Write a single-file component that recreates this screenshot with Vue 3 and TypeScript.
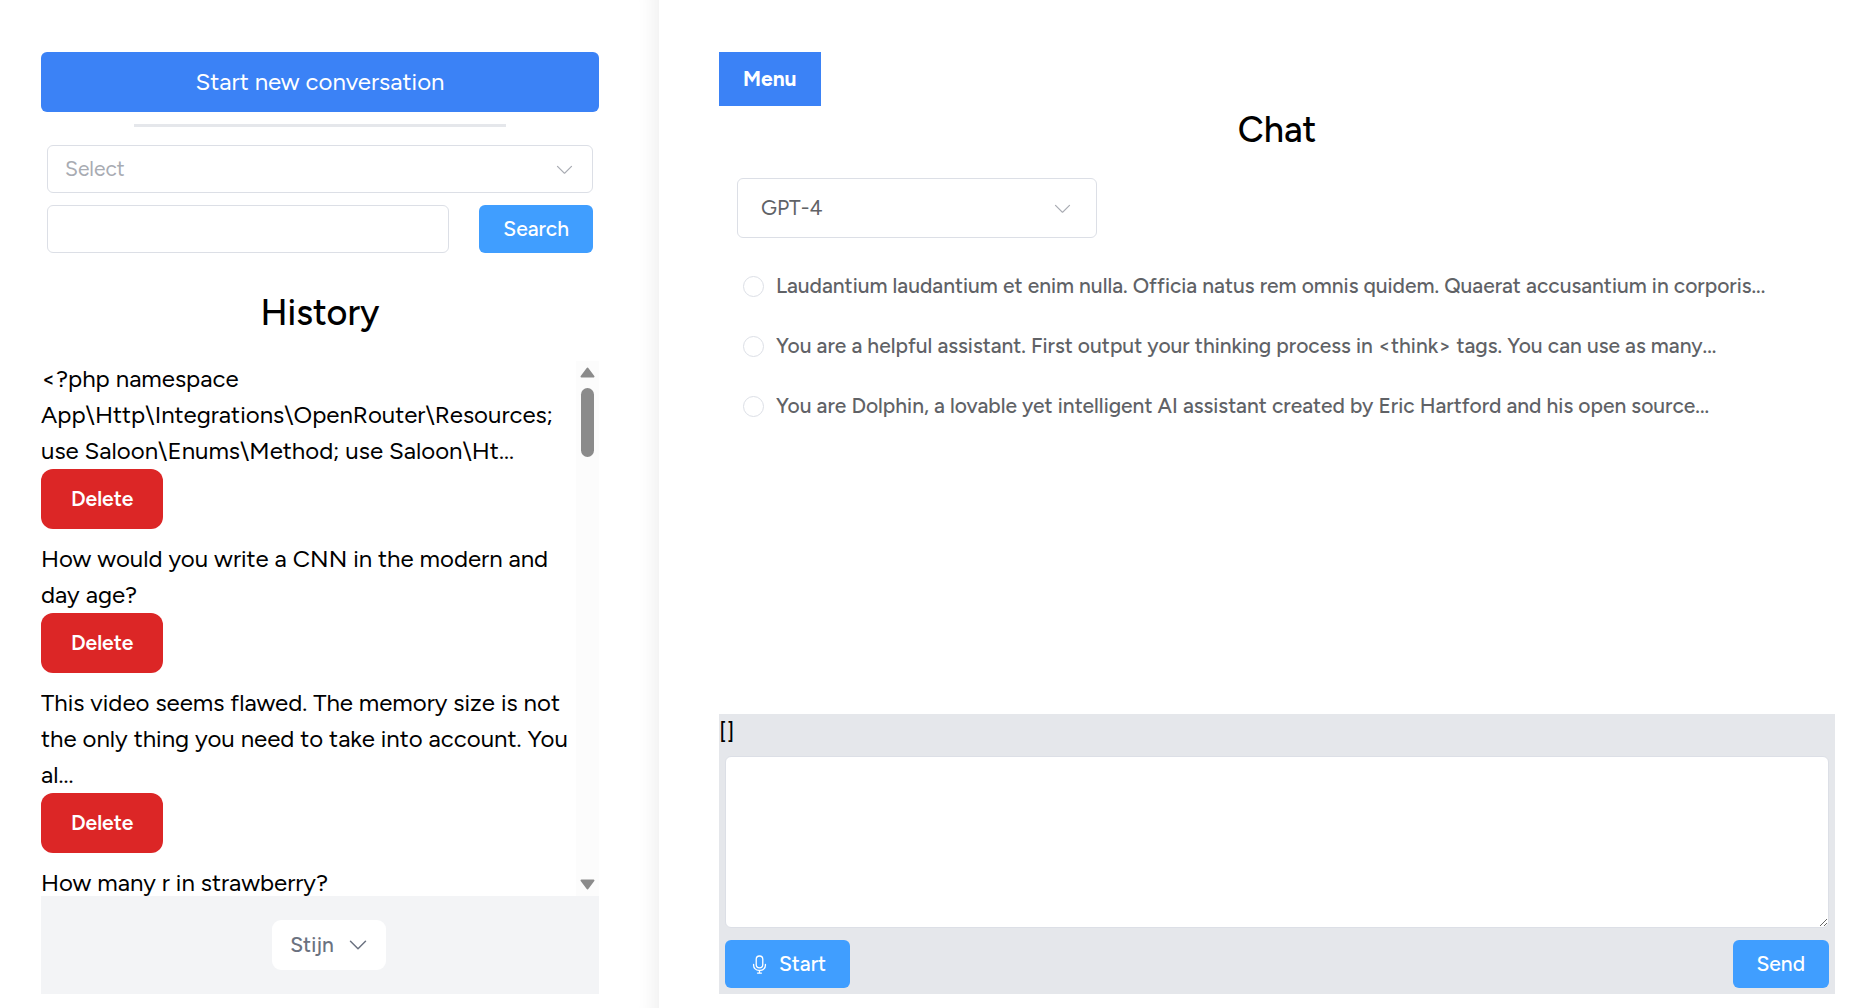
<script setup lang="ts">
import { ref } from 'vue'

interface Conversation {
  id: number
  title: string
}

const conversations: Conversation[] = [
  {
    id: 1,
    title:
      '<?php namespace App\\Http\\Integrations\\OpenRouter\\Resources; use Saloon\\Enums\\Method; use Saloon\\Ht...',
  },
  { id: 2, title: 'How would you write a CNN in the modern and day age?' },
  {
    id: 3,
    title:
      'This video seems flawed. The memory size is not the only thing you need to take into account. You al...',
  },
  { id: 4, title: 'How many r in strawberry?' },
]

const prompts: string[] = [
  'Laudantium laudantium et enim nulla. Officia natus rem omnis quidem. Quaerat accusantium in corporis...',
  'You are a helpful assistant. First output your thinking process in <think> tags. You can use as many...',
  'You are Dolphin, a lovable yet intelligent AI assistant created by Eric Hartford and his open source...',
]

const filter = ref('')
const query = ref('')
const model = ref('gpt-4')
const prompt = ref<number | null>(null)
const message = ref('')
const attachments = ref<string[]>([])

const chevron =
  'M831.872 340.864 512 652.672 192.128 340.864a30.592 30.592 0 0 0-42.752 0 29.12 29.12 0 0 0 0 41.6L489.664 714.24a32 32 0 0 0 44.672 0l340.288-331.712a29.12 29.12 0 0 0 0-41.728 30.592 30.592 0 0 0-42.752 0z'
const microphone =
  'M512 128a128 128 0 0 0-128 128v256a128 128 0 1 0 256 0V256a128 128 0 0 0-128-128zm0-64a192 192 0 0 1 192 192v256a192 192 0 1 1-384 0V256A192 192 0 0 1 512 64zm-32 832v-64a288 288 0 0 1-288-288v-32a32 32 0 0 1 64 0v32a224 224 0 0 0 224 224h64a224 224 0 0 0 224-224v-32a32 32 0 1 1 64 0v32a288 288 0 0 1-288 288v64h64a32 32 0 1 1 0 64H416a32 32 0 1 1 0-64h64z'
</script>

<template>
  <div class="layout">
    <aside class="sidebar">
      <button type="button" class="new-conversation">Start new conversation</button>
      <hr class="divider" />

      <form class="filters" @submit.prevent>
        <div class="select">
          <select v-model="filter" class="select-field placeholder" aria-label="Filter">
            <option value="">Select</option>
          </select>
          <svg class="select-icon" viewBox="0 0 1024 1024" aria-hidden="true"><path :d="chevron" /></svg>
        </div>
        <div class="search">
          <input v-model="query" type="text" class="search-field" aria-label="Search conversations" />
          <button type="submit" class="primary">Search</button>
        </div>
      </form>

      <h2 class="title history-title">History</h2>

      <div class="history">
        <ul class="history-list">
          <li v-for="item in conversations" :key="item.id" class="history-item">
            <a href="#" class="history-link">{{ item.title }}</a>
            <button type="button" class="delete">Delete</button>
          </li>
        </ul>
        <div class="scrollbar" aria-hidden="true">
          <svg class="arrow" viewBox="0 0 15 11"><path d="M7.500 1.500 13.500 9.500H1.500Z" /></svg>
          <div class="track"><div class="thumb"></div></div>
          <svg class="arrow" viewBox="0 0 15 11"><path d="M7.500 9.500 13.500 1.500H1.500Z" /></svg>
        </div>
      </div>

      <div class="account">
        <button type="button" class="account-button">
          Stijn
          <svg class="account-icon" viewBox="0 0 24 24" aria-hidden="true">
            <path d="m19.500 8.250-7.500 7.500-7.500-7.500" />
          </svg>
        </button>
      </div>
    </aside>

    <main class="chat">
      <button type="button" class="menu">Menu</button>
      <h1 class="title">Chat</h1>

      <div class="options">
        <div class="select model">
          <select v-model="model" class="select-field" aria-label="Model">
            <option value="gpt-4">GPT-4</option>
          </select>
          <svg class="select-icon" viewBox="0 0 1024 1024" aria-hidden="true"><path :d="chevron" /></svg>
        </div>
        <div class="prompts">
          <label v-for="(text, index) in prompts" :key="index" class="prompt">
            <input v-model="prompt" type="radio" name="prompt" class="radio" :value="index" />
            <span class="prompt-text">{{ text }}</span>
          </label>
        </div>
      </div>

      <form class="composer" @submit.prevent>
        <div class="attachments">{{ JSON.stringify(attachments) }}</div>
        <div class="composer-body">
          <textarea v-model="message" class="message" aria-label="Message"></textarea>
          <div class="actions">
            <button type="button" class="primary record">
              <svg class="record-icon" viewBox="0 0 1024 1024" aria-hidden="true"><path :d="microphone" /></svg>
              Start
            </button>
            <button type="submit" class="primary">Send</button>
          </div>
        </div>
      </form>
    </main>
  </div>
</template>

<style>
body {
  margin: 0;
  background: #ffffff;
}
</style>

<style scoped>
.layout,
.layout * {
  box-sizing: border-box;
}

.layout {
  display: grid;
  grid-template-columns: minmax(0, 659fr) minmax(0, 1204fr);
  height: 100vh;
  font-family: Figtree, Inter, sans-serif;
  font-size: 24px;
  line-height: 36px;
  color: #000000;
}

button,
input,
select,
textarea {
  margin: 0;
  font: inherit;
}

button {
  border: 0;
  cursor: pointer;
}

.sidebar {
  display: flex;
  flex-direction: column;
  min-height: 0;
  padding: 52px 60px 14px 41px;
  box-shadow: inset -24px 0 18px -18px rgba(0, 0, 0, 0.06);
}

.new-conversation {
  flex: none;
  height: 60px;
  border-radius: 6px;
  background: #3b82f6;
  color: #ffffff;
}

.divider {
  flex: none;
  width: 66.67%;
  height: 3px;
  margin: 12px auto 18px;
  border: 0;
  background: #e5e7eb;
}

.filters {
  display: flex;
  flex-direction: column;
  gap: 12px;
  padding: 0 6px;
  font-size: 21px;
}

.select {
  display: grid;
  align-items: center;
  height: 48px;
}

.select-field {
  grid-area: 1 / 1;
  width: 100%;
  height: 100%;
  padding: 0 48px 0 17px;
  border: 1px solid #dcdfe6;
  border-radius: 6px;
  background: #ffffff;
  color: #606266;
  appearance: none;
}

.placeholder {
  color: #a8abb2;
}

.select-icon {
  grid-area: 1 / 1;
  justify-self: end;
  width: 21px;
  height: 21px;
  margin-right: 18px;
  fill: #a8abb2;
  pointer-events: none;
}

.search {
  display: flex;
  gap: 30px;
}

.search-field {
  flex: 1;
  min-width: 0;
  height: 48px;
  padding: 0 17px;
  border: 1px solid #dcdfe6;
  border-radius: 6px;
  background: #ffffff;
}

.primary {
  height: 48px;
  padding: 0 24px;
  border-radius: 6px;
  background: #409eff;
  color: #ffffff;
  font-size: 21px;
  font-weight: 500;
}

.title {
  margin: 0;
  font-size: 36px;
  font-weight: 500;
  line-height: 48px;
  text-align: center;
}

.history-title {
  margin: 36px 0 24px;
}

.history {
  display: flex;
  flex: 1;
  min-height: 0;
}

.history-list {
  flex: 1;
  min-width: 0;
  margin: 0;
  padding: 0;
  overflow-y: auto;
  list-style: none;
  scrollbar-width: none;
}

.history-item {
  margin-bottom: 12px;
}

.history-link {
  display: block;
  color: inherit;
  text-decoration: none;
}

.delete {
  display: block;
  height: 60px;
  padding: 0 30px;
  border-radius: 12px;
  background: #dc2626;
  color: #ffffff;
  font-size: 21px;
  font-weight: 600;
}

.scrollbar {
  display: flex;
  flex: none;
  flex-direction: column;
  align-items: center;
  gap: 10px;
  width: 23px;
  padding: 6px 0;
  background: #fcfcfc;
}

.arrow {
  width: 15px;
  height: 11px;
  fill: #8b8b8b;
  stroke: #8b8b8b;
  stroke-width: 2;
  stroke-linejoin: round;
}

.track {
  flex: 1;
  width: 13px;
}

.thumb {
  height: 69px;
  border-radius: 7px;
  background: #8b8b8b;
}

.account {
  display: flex;
  flex: none;
  align-items: center;
  justify-content: center;
  height: 98px;
  padding-left: 18px;
  background: #f3f4f6;
}

.account-button {
  display: flex;
  align-items: center;
  gap: 12px;
  height: 50px;
  padding: 0 16px 0 18px;
  border-radius: 9px;
  background: #ffffff;
  color: #6b7280;
  font-size: 21px;
  font-weight: 500;
}

.account-icon {
  width: 24px;
  height: 24px;
  fill: none;
  stroke: #6b7280;
  stroke-width: 1.5;
  stroke-linecap: round;
  stroke-linejoin: round;
}

.chat {
  display: flex;
  flex-direction: column;
  min-width: 0;
  padding: 52px 28px 14px 60px;
}

.menu {
  align-self: flex-start;
  height: 54px;
  padding: 0 24px;
  background: #3b82f6;
  color: #ffffff;
  font-size: 21px;
  font-weight: 700;
}

.options {
  display: flex;
  flex-direction: column;
  gap: 18px;
  padding: 24px 18px;
  font-size: 21px;
}

.model {
  width: 360px;
  height: 60px;
}

.model .select-field {
  padding: 0 48px 0 23px;
}

.model .select-icon {
  margin-right: 24px;
}

.prompts {
  display: flex;
  flex-direction: column;
  padding-left: 6px;
}

.prompt {
  display: flex;
  align-items: center;
  gap: 12px;
  height: 60px;
  color: #606266;
  font-weight: 500;
}

.radio {
  flex: none;
  width: 21px;
  height: 21px;
  border: 1px solid #dcdfe6;
  border-radius: 50%;
  background: #ffffff;
  appearance: none;
}

.radio:checked {
  border: 6px solid #409eff;
}

.prompt-text {
  overflow: hidden;
  text-overflow: ellipsis;
  white-space: nowrap;
}

.composer {
  margin-top: auto;
  background: #e5e7eb;
}

.composer-body {
  display: flex;
  flex-direction: column;
  gap: 12px;
  padding: 6px;
}

.message {
  display: block;
  width: 100%;
  height: 172px;
  padding: 8px 16px;
  border: 1px solid #dcdfe6;
  border-radius: 6px;
  background: #ffffff;
  font-size: 21px;
  resize: vertical;
}

.actions {
  display: flex;
  justify-content: space-between;
}

.record {
  display: flex;
  align-items: center;
  gap: 9px;
}

.record-icon {
  width: 21px;
  height: 21px;
  fill: #ffffff;
}
</style>
